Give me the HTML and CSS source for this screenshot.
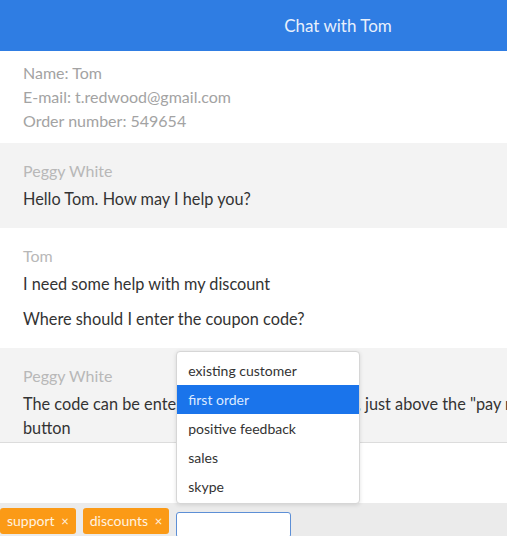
FILE: index.html
```html
<!DOCTYPE html>
<html lang="en">
<head>
    <meta charset="UTF-8">
    <meta name="viewport" content="width=device-width, initial-scale=1.0">
    <title>Chat with Tom</title>
    <link rel="stylesheet" href="styles.css">
</head>
<body>
    <div class="chat">
        <div class="header">Chat with Tom</div>

        <div class="info">
            <p>Name: Tom</p>
            <p>E-mail: t.redwood@gmail.com</p>
            <p>Order number: 549654</p>
        </div>

        <div class="messages">
            <div class="message agent">
                <div class="author">Peggy White</div>
                <p class="text">Hello Tom. How may I help you?</p>
            </div>
            <div class="message client">
                <div class="author">Tom</div>
                <p class="text">I need some help with my discount</p>
                <p class="text">Where should I enter the coupon code?</p>
            </div>
            <div class="message agent">
                <div class="author">Peggy White</div>
                <p class="text">The code can be entered on the checkout page, just above the "pay now" button</p>
            </div>
        </div>

        <div class="composer"></div>

        <div class="tags">
            <span class="tag">support <span class="remove">×</span></span>
            <span class="tag">discounts <span class="remove">×</span></span>
            <div class="tag-input">
                <input type="text">
                <ul class="suggestions">
                    <li>existing customer</li>
                    <li class="active">first order</li>
                    <li>positive feedback</li>
                    <li>sales</li>
                    <li>skype</li>
                </ul>
            </div>
        </div>
    </div>
</body>
</html>
```

FILE: styles.css
```css
* {
    margin: 0;
    padding: 0;
    box-sizing: border-box;
}

body {
    font-family: Lato, "Open Sans", sans-serif;
    background-color: #fff;
    overflow: hidden;
}

.chat {
    width: 676px;
    color: #333;
    font-size: 16px;
}

.header {
    height: 51px;
    background-color: #2f7de3;
    color: #e8f0fc;
    font-size: 17px;
    display: flex;
    align-items: center;
    justify-content: center;
}

.info {
    padding: 10px 23px;
    color: #a3a3a3;
    line-height: 24px;
}

.messages {
    height: 299px;
    overflow: hidden;
}

.message {
    padding: 16px 23px 17px;
    line-height: 24px;
}

.message.agent {
    background-color: #f3f3f3;
}

.author {
    color: #b8b8b8;
}

.text {
    margin-top: 4px;
    max-width: 570px;
    font-size: 16.3px;
}

.text + .text {
    margin-top: 11px;
}

.composer {
    height: 61px;
    border-top: 1px solid #dcdcdc;
    background-color: #fff;
}

.tags {
    height: 33px;
    background-color: #ebebeb;
    display: flex;
    align-items: flex-start;
    gap: 7px;
    padding-top: 5px;
}

.tag {
    height: 26px;
    padding: 0 7px;
    background-color: #fb9a16;
    color: #fff3e0;
    font-size: 14px;
    line-height: 26px;
    border-radius: 3px;
}

.tag .remove {
    margin-left: 3px;
    font-size: 13px;
}

.tag-input {
    position: relative;
    margin-top: 4px;
}

.tag-input input {
    width: 115px;
    height: 26px;
    border: 1px solid #5d8fd6;
    border-radius: 3px;
    background-color: #fff;
}

.suggestions {
    position: absolute;
    left: 0;
    bottom: calc(100% + 8px);
    width: 184px;
    padding: 4px 0 2px;
    list-style: none;
    background-color: #fff;
    border: 1px solid #d6d6d6;
    border-radius: 4px;
    box-shadow: 0 1px 4px rgba(0,0,0,0.12);
    font-size: 14px;
}

.suggestions li {
    height: 29px;
    line-height: 29px;
    padding-left: 11px;
    color: #333;
}

.suggestions li.active {
    background-color: #1a74eb;
    color: #dceaff;
}
```
